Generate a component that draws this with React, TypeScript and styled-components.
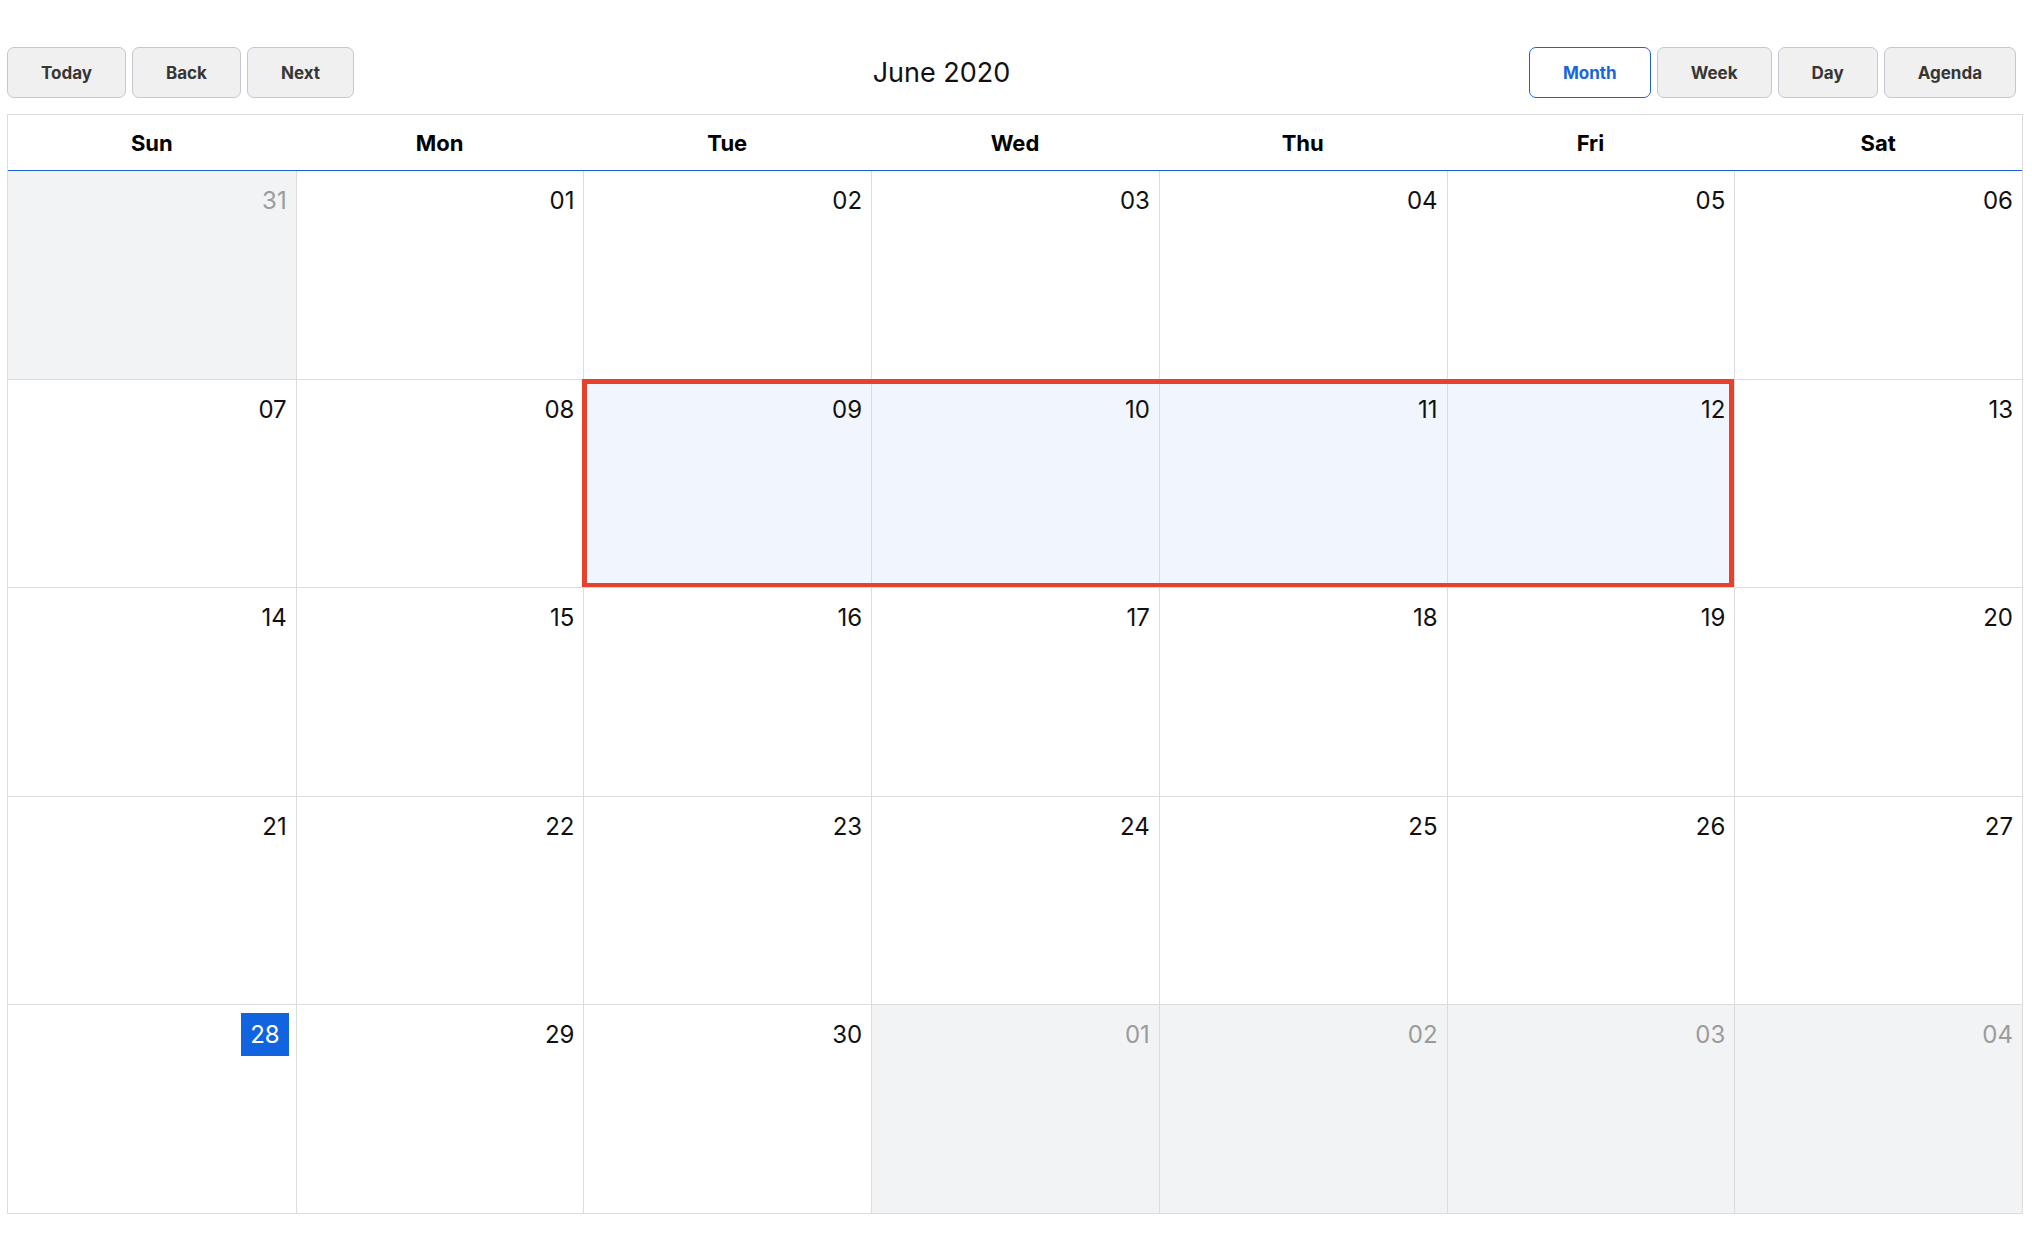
import React from "react";
import styled, { createGlobalStyle, css } from "styled-components";

const GlobalStyle = createGlobalStyle`
  html, body {
    margin: 0;
    padding: 0;
    background: #fff;
  }
  body {
    font-family: Inter, "Open Sans", "Liberation Sans", sans-serif;
    color: #111;
  }
`;

type Day = {
  label: string;
  offRange?: boolean;
  today?: boolean;
};

const WEEKDAYS = ["Sun", "Mon", "Tue", "Wed", "Thu", "Fri", "Sat"];

const pad = (n: number) => (n < 10 ? `0${n}` : `${n}`);

function buildWeeks(): Day[][] {
  const days: Day[] = [{ label: "31", offRange: true }];
  for (let d = 1; d <= 30; d++) {
    days.push({ label: pad(d), today: d === 28 });
  }
  for (let d = 1; d <= 4; d++) {
    days.push({ label: pad(d), offRange: true });
  }
  const weeks: Day[][] = [];
  for (let i = 0; i < days.length; i += 7) weeks.push(days.slice(i, i + 7));
  return weeks;
}

// week index -> selected column range
const selection = { week: 1, from: 2, to: 5 };

export default function App() {
  const weeks = buildWeeks();
  const views = ["Month", "Week", "Day", "Agenda"];

  return (
    <Page>
      <GlobalStyle />
      <Toolbar>
        <ButtonGroup>
          <ToolButton>Today</ToolButton>
          <ToolButton>Back</ToolButton>
          <ToolButton>Next</ToolButton>
        </ButtonGroup>
        <Label>June 2020</Label>
        <ButtonGroup>
          {views.map((v) => (
            <ToolButton key={v} $active={v === "Month"}>
              {v}
            </ToolButton>
          ))}
        </ButtonGroup>
      </Toolbar>

      <MonthView>
        <HeaderRow>
          {WEEKDAYS.map((d) => (
            <HeaderCell key={d}>{d}</HeaderCell>
          ))}
        </HeaderRow>

        {weeks.map((week, wi) => {
          const hasSel = wi === selection.week;
          return (
            <WeekRow key={wi}>
              {week.map((day, di) => {
                const selected =
                  hasSel && di >= selection.from && di <= selection.to;
                return (
                  <DayCell
                    key={di}
                    $offRange={day.offRange}
                    $selected={selected}
                  >
                    <DateNumber $offRange={day.offRange} $today={day.today}>
                      {day.label}
                    </DateNumber>
                  </DayCell>
                );
              })}
              {hasSel && (
                <SelectionBox
                  style={{
                    left: `calc(${(selection.from / 7) * 100}% - 1px)`,
                    width: `calc(${
                      ((selection.to - selection.from + 1) / 7) * 100
                    }% + 1px)`,
                  }}
                />
              )}
            </WeekRow>
          );
        })}
      </MonthView>
    </Page>
  );
}

const Page = styled.div`
  padding: 47px 9px 46px 7px;
`;

const Toolbar = styled.div`
  display: flex;
  align-items: center;
  padding-right: 7px;
  margin-bottom: 16px;
`;

const ButtonGroup = styled.div`
  display: flex;
  gap: 6px;
`;

const ToolButton = styled.button<{ $active?: boolean }>`
  height: 51px;
  padding: 0 33px;
  border-radius: 7px;
  border: 1px solid #c3c7d0;
  background: #f0f0f0;
  color: #363636;
  font-family: Inter, "Open Sans", "Liberation Sans", sans-serif;
  font-size: 17px;
  font-weight: 700;
  cursor: pointer;

  ${(p) =>
    p.$active &&
    css`
      background: #fff;
      border-color: #1a62d8;
      color: #1866dd;
    `}
`;

const Label = styled.div`
  flex: 1;
  text-align: center;
  font-size: 27px;
  font-weight: 400;
  color: #111;
`;

const MonthView = styled.div`
  height: 1100px;
  display: flex;
  flex-direction: column;
  border: 1px solid #dcdcdc;
  box-sizing: border-box;
`;

const HeaderRow = styled.div`
  display: grid;
  grid-template-columns: repeat(7, 1fr);
  height: 56px;
  flex: none;
  border-bottom: 1px solid #1a5fd6;
  box-sizing: border-box;
`;

const HeaderCell = styled.div`
  display: flex;
  align-items: center;
  justify-content: center;
  font-size: 22px;
  font-weight: 700;
  color: #000;
`;

const WeekRow = styled.div`
  position: relative;
  flex: 1;
  display: grid;
  grid-template-columns: repeat(7, 1fr);

  & + & {
    border-top: 1px solid #dcdcdc;
  }
`;

const DayCell = styled.div<{ $offRange?: boolean; $selected?: boolean }>`
  display: flex;
  flex-direction: column;
  align-items: flex-end;
  padding: 8px 7px 0 0;
  background: ${(p) =>
    p.$selected ? "#f1f5fd" : p.$offRange ? "#f2f3f5" : "#fff"};

  & + & {
    border-left: 1px solid #dcdcdc;
  }
`;

const DateNumber = styled.span<{ $offRange?: boolean; $today?: boolean }>`
  display: inline-block;
  padding: 6px 2px;
  font-size: 24px;
  line-height: 31px;
  font-weight: 400;
  color: ${(p) => (p.$offRange ? "#9b9b9b" : "#111")};

  ${(p) =>
    p.$today &&
    css`
      padding: 6px 9px;
      background: #1163e0;
      color: #fff;
    `}
`;

const SelectionBox = styled.div`
  position: absolute;
  top: -1px;
  bottom: -1px;
  border: 5px solid #e5412c;
  box-sizing: border-box;
  pointer-events: none;
`;
